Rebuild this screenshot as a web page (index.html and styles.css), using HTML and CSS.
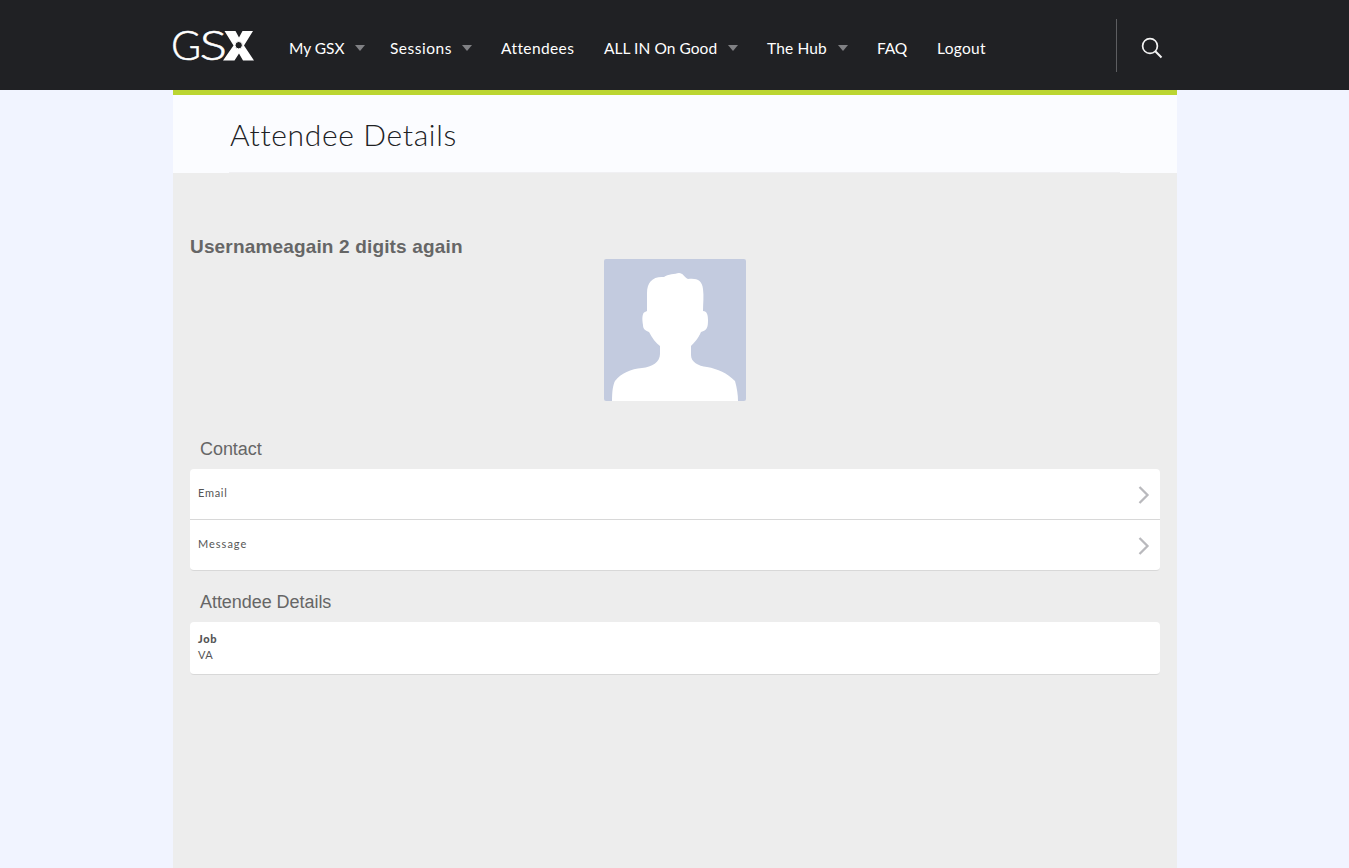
FILE: index.html
```html
<!DOCTYPE html>
<html lang="en">
<head>
<meta charset="utf-8">
<title>Attendee Details</title>
<link rel="stylesheet" href="styles.css">
</head>
<body>
<header class="topbar">
  <div class="topbar-inner">
    <a class="logo" aria-label="GSX">
      <svg width="82" height="32" viewBox="0 0 82 32">
        <text class="logo-text" x="-2" y="30">G</text>
        <text class="logo-text" x="26.500" y="30" textLength="27.500" lengthAdjust="spacingAndGlyphs">S</text>
        <path fill="#fff" d="M51.500 1H62.500L66 7.500L69.500 1H80L71 15.500L81 30.500H70L66 23.500L61.500 30.500H50L60.500 15.500Z"/>
        <circle cx="65.700" cy="15.200" r="3.700" fill="#202124" stroke="#fff" stroke-width="1"/>
      </svg>
    </a>
    <nav class="nav">
      <a class="nav-item first"><span>My GSX</span><i class="caret"></i></a>
      <a class="nav-item sessions"><span>Sessions</span><i class="caret"></i></a>
      <a class="nav-item attendees"><span>Attendees</span></a>
      <a class="nav-item good"><span>ALL IN On Good</span><i class="caret"></i></a>
      <a class="nav-item hub"><span>The Hub</span><i class="caret"></i></a>
      <a class="nav-item faq"><span>FAQ</span></a>
      <a class="nav-item logout"><span>Logout</span></a>
    </nav>
    <div class="search">
      <svg width="22" height="22" viewBox="0 0 22 22" fill="none" stroke="#f4f4f4" stroke-width="1.700">
        <circle cx="9" cy="9" r="7.400"/><path d="M14.300 14.300L20.500 20.500" stroke-width="2"/>
      </svg>
    </div>
  </div>
</header>
<main class="page">
  <div class="page-head"><h1>Attendee Details</h1></div>
  <div class="content">
    <h2 class="name">Usernameagain 2 digits again</h2>
    <svg class="avatar" width="142" height="142" viewBox="0 0 142 142">
      <rect width="142" height="142" rx="2" fill="#c3cbdf"/>
      <path fill="#fff" d="M8 142C8 132 9 126 11 122C17 114 27 110 38 109C48 108 56 103 56 95V87C52 84 48 79 45 73C40 71 39 69 39 66C38 60 38 54 41 53L43 52V34C43 23 49 17 60 18C64 15 71 15 75 14C79 14 80 18 84 20C93 19 98 21 99 30C100 37 99 45 99 52C103 52 104 56 104 61C104 69 103 71 97 73C94 80 90 84 87 87V96C87 103 94 107 103 108C114 110 123 114 131 122C133 129 134 136 134 142Z"/>
    </svg>
    <h3 class="section">Contact</h3>
    <ul class="card contact">
      <li class="row"><span class="email">Email</span><svg width="12" height="18" viewBox="0 0 12 18"><path class="chevron" d="M1.500 1L9.500 9L1.500 17"/></svg></li>
      <li class="row"><span class="message">Message</span><svg width="12" height="18" viewBox="0 0 12 18"><path class="chevron" d="M1.500 1L9.500 9L1.500 17"/></svg></li>
    </ul>
    <h3 class="section">Attendee Details</h3>
    <div class="card details"><strong>Job</strong><span>VA</span></div>
  </div>
</main>
</body>
</html>
```
FILE: styles.css
```css
* { box-sizing: border-box; }
body { margin: 0; height: 868px; overflow: hidden; background: #f1f4ff; font-family: Lato, sans-serif; display: flex; flex-direction: column; }
.topbar { height: 90px; flex: none; background: #202124; }
.topbar-inner { width: 1004px; margin-left: 173px; height: 90px; display: flex; align-items: flex-start; }
.logo { width: 116px; padding-top: 30px; line-height: 0; }
.logo svg { overflow: visible; }
.logo-text { font-family: Lato, sans-serif; font-weight: 300; font-size: 41px; line-height: 1; fill: #fff; stroke: #fff; stroke-width: 0.5px; }
.nav { display: grid; grid-template-columns: 101px 111px 103px 163px 110px 60px 1fr; width: 827px; padding-top: 38px; }
.nav-item { display: flex; justify-content: space-between; align-items: center; padding-right: 30px; height: 20px; color: #fff; font-size: 15.5px; line-height: 20px; white-space: nowrap; letter-spacing: 0.3px; }
.first { padding-right: 26px; letter-spacing: 0; }
.sessions { letter-spacing: 0.5px; }
.attendees { letter-spacing: 0.4px; }
.good { letter-spacing: 0.05px; }
.hub { letter-spacing: 0.15px; }
.faq { letter-spacing: -0.2px; }
.caret { width: 10px; height: 6px; margin-right: -1px; background: #808184; clip-path: polygon(0 0, 100% 0, 50% 100%); }
.search { width: 61px; height: 53px; margin-top: 19px; border-left: 1px solid #5d5e61; padding: 18px 0 0 24px; line-height: 0; }
.page { width: 1004px; margin-left: 173px; flex: 1; background: #ededed; }
.page-head { height: 83px; border-top: 5px solid #bbd531; background: #fbfcff; padding: 0 57px; }
.page-head h1 { margin: 0 0 0 -1px; padding-left: 1px; height: 78px; border-bottom: 1px solid #f0f0f3; font-weight: 300; font-size: 30px; line-height: 78px; letter-spacing: 0.65px; color: #202124; }
.content { padding: 63px 17px 0; font-family: "Liberation Sans", Arial, sans-serif; color: #666; }
.name { margin: 0; font-size: 19px; line-height: 22px; letter-spacing: 0.16px; }
.avatar { display: block; margin: 1px auto 37px; }
.section { margin: 0; padding-left: 10px; font-weight: 400; font-size: 18px; line-height: 22px; letter-spacing: -0.05px; }
.card { list-style: none; margin: 9px 0 20px; padding: 0; background: #fff; border-radius: 4px; border-bottom: 1px solid #d8d8d8; font: 11px/16px Lato, sans-serif; color: #555; }
.row { height: 50px; padding: 0 10px 2px 8px; display: flex; align-items: center; justify-content: space-between; letter-spacing: 0.7px; }
.row svg { margin-top: 4px; }
.row + .row { border-top: 1px solid #d8d8d8; height: 51px; }
.message { letter-spacing: 1px; }
.chevron { fill: none; stroke: #b9b9bd; stroke-width: 2.3; }
.details { display: flex; flex-direction: column; height: 53px; padding: 9px 8px; }
.details strong { font-weight: 900; letter-spacing: 0.7px; }
.details span { letter-spacing: 0.3px; }
```
